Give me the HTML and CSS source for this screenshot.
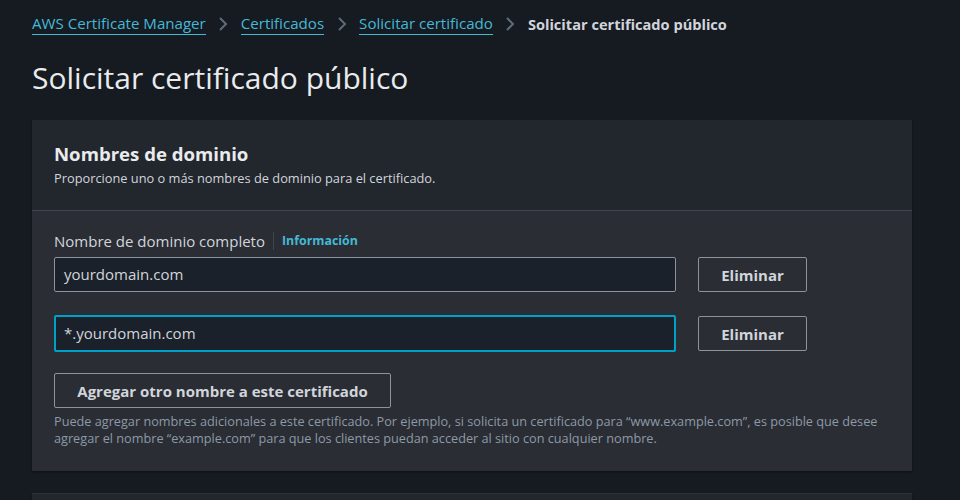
FILE: index.html
```html
<!DOCTYPE html>
<html lang="es">
<head>
<meta charset="utf-8">
<title>Solicitar certificado público</title>
<link rel="stylesheet" href="styles.css">
</head>
<body>
<div class="page">
  <nav class="crumbs">
    <a class="crumb-link" href="#">AWS Certificate Manager</a>
    <svg class="chev" viewBox="0 0 10 16" width="10" height="16"><path d="M2 2l6 6-6 6" fill="none" stroke="currentColor" stroke-width="2"/></svg>
    <a class="crumb-link" href="#">Certificados</a>
    <svg class="chev" viewBox="0 0 10 16" width="10" height="16"><path d="M2 2l6 6-6 6" fill="none" stroke="currentColor" stroke-width="2"/></svg>
    <a class="crumb-link" href="#">Solicitar certificado</a>
    <svg class="chev" viewBox="0 0 10 16" width="10" height="16"><path d="M2 2l6 6-6 6" fill="none" stroke="currentColor" stroke-width="2"/></svg>
    <span class="crumb-current">Solicitar certificado público</span>
  </nav>

  <h1 class="title">Solicitar certificado público</h1>

  <section class="card">
    <header class="card-head">
      <h2 class="card-title">Nombres de dominio</h2>
      <p class="card-desc">Proporcione uno o más nombres de dominio para el certificado.</p>
    </header>
    <div class="card-body">
      <div class="label-row">
        <span class="label">Nombre de dominio completo</span>
        <span class="sep"></span>
        <a class="info" href="#">Información</a>
      </div>
      <div class="row">
        <div class="input">yourdomain.com</div>
        <button class="btn">Eliminar</button>
      </div>
      <div class="row row2">
        <div class="input focus">*.yourdomain.com</div>
        <button class="btn">Eliminar</button>
      </div>
      <button class="btn add">Agregar otro nombre a este certificado</button>
      <p class="help">Puede agregar nombres adicionales a este certificado. Por ejemplo, si solicita un certificado para “www.example.com”, es posible que desee agregar el nombre “example.com” para que los clientes puedan acceder al sitio con cualquier nombre.</p>
    </div>
  </section>

  <section class="card card-next"></section>
</div>
</body>
</html>
```

FILE: styles.css
```css
* { box-sizing: border-box; }
html, body { margin: 0; padding: 0; }
body {
  background: #161a21;
  color: #d1d5db;
  font-family: "Open Sans", "Noto Sans", sans-serif;
  height: 500px;
  overflow: hidden;
}
.page {
  padding: 13px 48px 0 32px;
}
.crumbs {
  display: flex;
  align-items: center;
  gap: 12.5px;
  font-size: 15.1px;
  line-height: 22px;
}
.crumb-link {
  color: #44b9d6;
  text-decoration: none;
  border-bottom: 1px solid #44b9d6;
  line-height: 21px;
}
.chev { color: #5f6b7a; width: 10px; height: 16px; }
.crumb-current { font-weight: 700; color: #d1d5db; font-size: 14.6px; }

.title {
  margin: 24px 0 0;
  font-size: 30px;
  font-weight: 400;
  line-height: 38px;
  color: #e9ebed;
}

.card {
  margin-top: 23px;
  background: #2a2d33;
  box-shadow: 0 1px 2px rgba(0,0,0,.35);
}
.card-head {
  background: #22262d;
  padding: 22px 22px 23px;
  border-bottom: 1px solid #414750;
}
.card-title {
  margin: 0;
  font-size: 18.6px;
  font-weight: 700;
  line-height: 24px;
  color: #e9ebed;
}
.card-desc {
  margin: 4px 0 0;
  font-size: 12.8px;
  line-height: 17px;
  color: #d1d5db;
}
.card-body {
  padding: 20px 22px 24px;
}
.label-row {
  display: flex;
  align-items: center;
  font-size: 15px;
  line-height: 20px;
}
.label { color: #d1d5db; }
.sep {
  width: 1px;
  height: 18px;
  background: #414750;
  margin: 0 8px;
}
.info {
  color: #44b9d6;
  font-size: 12.4px;
  font-weight: 700;
  text-decoration: none;
}
.row {
  display: flex;
  align-items: center;
  gap: 22px;
  margin-top: 6px;
}
.row2 { margin-top: 23px; }
.input {
  width: 622px;
  height: 35px;
  border: 1px solid #8d9399;
  border-radius: 2px;
  background: #1b212a;
  color: #d1d5db;
  font-size: 15px;
  line-height: 33px;
  padding: 0 9px;
}
.input.focus {
  border: 2px solid #00a1c9;
  height: 37px;
  line-height: 33px;
  padding: 0 8px;
}
.btn {
  font-family: inherit;
  background: transparent;
  border: 1px solid #8d9399;
  border-radius: 2px;
  color: #d1d5db;
  font-size: 15px;
  font-weight: 700;
  height: 35px;
  width: 109px;
  padding: 0;
}
.btn.add {
  display: block;
  margin-top: 21px;
  width: 337px;
}
.help {
  margin: 5px 0 0;
  font-size: 12.7px;
  line-height: 17px;
  color: #8d99a8;
}
.card-next {
  margin-top: 22px;
  height: 8px;
  border-top: 1px solid #2e333b;
  background: #22262d;
}
```
